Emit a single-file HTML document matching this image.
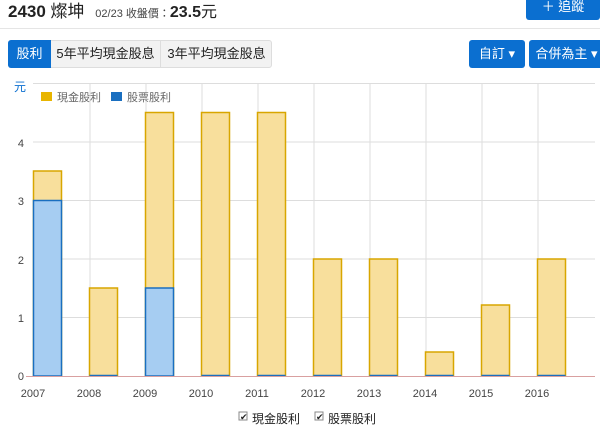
<!DOCTYPE html>
<html><head><meta charset="utf-8"><style>
body{margin:0;width:600px;height:435px;background:#fff;font-family:"Liberation Sans","Noto Sans CJK TC",sans-serif;position:relative;overflow:hidden}
.a{position:absolute}
.btn{position:absolute;background:#0b6fd0;color:#fff;font-size:13px;border-radius:3px;text-align:center;box-sizing:border-box}
</style></head><body>
<div class="a" style="left:8px;top:-3px;font-size:17px;color:#222;white-space:nowrap"><b>2430</b> 燦坤 <span style="font-size:11px;color:#444;margin-left:6px">02/23 收盤價：</span><b style="font-size:16px">23.5</b><span style="font-size:16px">元</span></div>
<div class="btn" style="left:526px;top:-4px;width:74px;height:24px;line-height:22px">＋ 追蹤</div>
<div class="a" style="left:0;top:28px;width:600px;height:1px;background:#e5e5e5"></div>
<div class="a" style="left:8px;top:40px;width:264px;height:28px;border:1px solid #ddd;border-radius:3px;background:#f2f2f2;box-sizing:border-box"></div>
<div class="btn" style="left:8px;top:40px;width:43px;height:28px;line-height:28px;border-radius:3px 0 0 3px">股利</div>
<div class="a" style="left:51px;top:40px;width:110px;height:28px;line-height:28px;font-size:13px;text-align:center;color:#222;border-right:1px solid #ddd;box-sizing:border-box">5年平均現金股息</div>
<div class="a" style="left:161px;top:40px;width:111px;height:28px;line-height:28px;font-size:13px;text-align:center;color:#222">3年平均現金股息</div>
<div class="btn" style="left:469px;top:40px;width:56px;height:28px;line-height:28px">自訂 ▾</div>
<div class="btn" style="left:529px;top:40px;width:75px;height:28px;line-height:28px">合併為主 ▾</div>
<svg class="a" style="left:0;top:0" width="600" height="435" font-family="Liberation Sans, Noto Sans CJK TC, sans-serif">
<g stroke="#ddd" stroke-width="1">
<line x1="33" x2="595" y1="83.5" y2="83.5"/><line x1="33" x2="595" y1="142" y2="142"/><line x1="33" x2="595" y1="200.5" y2="200.5"/><line x1="33" x2="595" y1="259" y2="259"/><line x1="33" x2="595" y1="317.5" y2="317.5"/>
<line x1="90" x2="90" y1="83" y2="376"/><line x1="202" x2="202" y1="83" y2="376"/><line x1="258" x2="258" y1="83" y2="376"/><line x1="370" x2="370" y1="83" y2="376"/><line x1="426" x2="426" y1="83" y2="376"/><line x1="482" x2="482" y1="83" y2="376"/><line x1="538" x2="538" y1="83" y2="376"/><line x1="146" x2="146" y1="83" y2="376"/><line x1="314" x2="314" y1="83" y2="376"/>
</g>
<text x="14" y="91" font-size="12" fill="#0b6fd0">元</text>
<rect x="41" y="92" width="11" height="9" fill="#e8b500"/><text x="57" y="101" font-size="11" fill="#666">現金股利</text>
<rect x="111" y="92" width="11" height="9" fill="#1a6fc0"/><text x="127" y="101" font-size="11" fill="#666">股票股利</text>
<g font-size="11" fill="#444" text-anchor="end">
<text x="24" y="147">4</text><text x="24" y="205">3</text><text x="24" y="264">2</text><text x="24" y="322">1</text><text x="24" y="380">0</text></g>
<g fill="#f8df9c" stroke="#d8a600" stroke-width="1.5">
<rect x="33.5" y="171" width="28" height="205"/>
<rect x="89.5" y="288" width="28" height="88"/>
<rect x="145.5" y="112.5" width="28" height="263.5"/>
<rect x="201.5" y="112.5" width="28" height="263.5"/>
<rect x="257.5" y="112.5" width="28" height="263.5"/>
<rect x="313.5" y="259" width="28" height="117"/>
<rect x="369.5" y="259" width="28" height="117"/>
<rect x="425.5" y="352" width="28" height="24"/>
<rect x="481.5" y="305" width="28" height="71"/>
<rect x="537.5" y="259" width="28" height="117"/>
</g>
<g fill="#a6cdf2" stroke="#1a6fc0" stroke-width="1.5">
<rect x="33.5" y="200.5" width="28" height="175.5"/>
<rect x="145.5" y="288" width="28" height="88"/>
</g>
<g stroke="#1a6fc0" stroke-width="1.5"><line x1="89.5" x2="117.5" y1="375.5" y2="375.5"/><line x1="201.5" x2="229.5" y1="375.5" y2="375.5"/><line x1="257.5" x2="285.5" y1="375.5" y2="375.5"/><line x1="313.5" x2="341.5" y1="375.5" y2="375.5"/><line x1="369.5" x2="397.5" y1="375.5" y2="375.5"/><line x1="425.5" x2="453.5" y1="375.5" y2="375.5"/><line x1="481.5" x2="509.5" y1="375.5" y2="375.5"/><line x1="537.5" x2="565.5" y1="375.5" y2="375.5"/></g>
<line x1="26" x2="595" y1="376.5" y2="376.5" stroke="#d9a0a0" stroke-width="1"/>
<g font-size="11" fill="#444" text-anchor="middle">
<text x="33" y="397">2007</text><text x="89" y="397">2008</text><text x="145" y="397">2009</text><text x="201" y="397">2010</text><text x="257" y="397">2011</text><text x="313" y="397">2012</text><text x="369" y="397">2013</text><text x="425" y="397">2014</text><text x="481" y="397">2015</text><text x="537" y="397">2016</text></g>
<rect x="239" y="412" width="8" height="8" fill="#fff" stroke="#888"/><text x="240" y="420" font-size="9" fill="#222">✔</text>
<text x="252" y="423" font-size="12" fill="#222">現金股利</text>
<rect x="315" y="412" width="8" height="8" fill="#fff" stroke="#888"/><text x="316" y="420" font-size="9" fill="#222">✔</text>
<text x="328" y="423" font-size="12" fill="#222">股票股利</text>
</svg>
</body></html>
